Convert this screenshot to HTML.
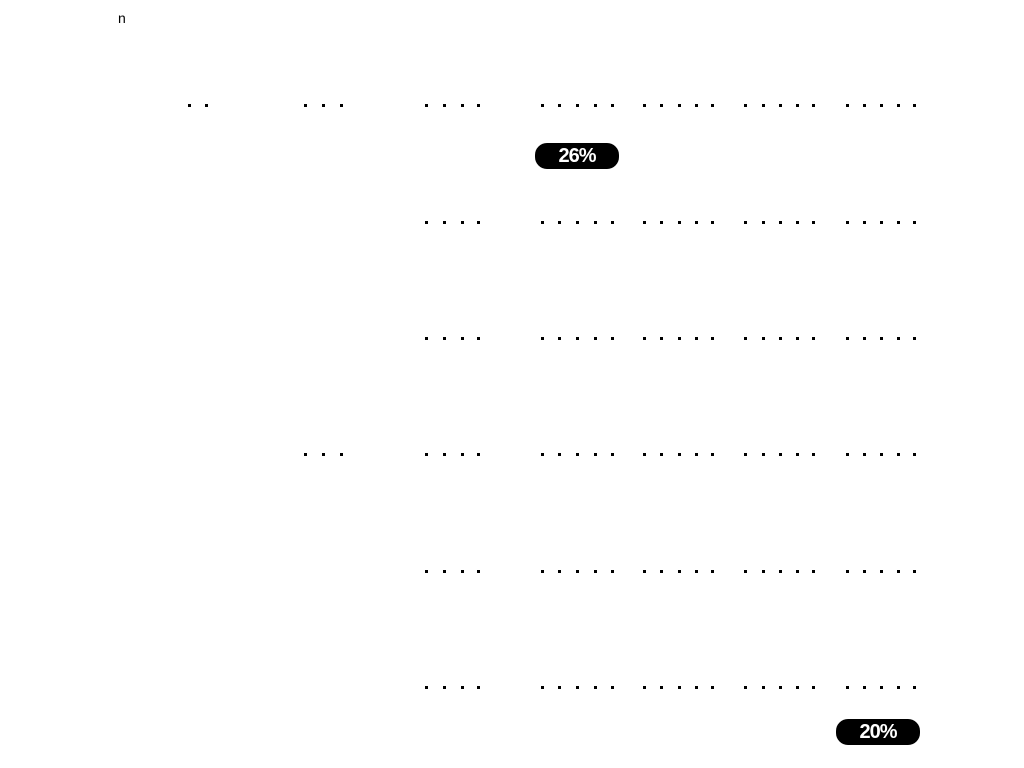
<!DOCTYPE html>
<html><head><meta charset="utf-8"><style>
html,body{margin:0;padding:0;background:#fff;width:1024px;height:768px;overflow:hidden;position:relative;font-family:"Liberation Sans",sans-serif}
.d{position:absolute;width:3px;height:3px;background:#000}
.b{position:absolute;width:80px;height:22px;border:2px solid #000;border-radius:12px;background:#000;color:#fff;font-weight:bold;font-size:20px;line-height:22px;text-align:center;letter-spacing:-1px}
.t{position:absolute;font-size:14px;color:#000}
</style></head><body>
<div class="t" style="left:118px;top:10px">n</div>
<div class="b" style="left:535px;top:143px">26%</div>
<div class="b" style="left:836px;top:719px">20%</div>
<div id="g"></div>
<script>
var rows=[104,221,337,453,570,686];
var g1=[188,205],g2=[304,322,340],rest=[425,443,461,477,541,558,576,594,611,643,660,678,695,711,744,762,779,796,812,846,863,880,897,913];
var h='';
rows.forEach(function(y,i){var xs=rest.slice();if(i==0)xs=xs.concat(g1,g2);if(i==3)xs=xs.concat(g2);
xs.forEach(function(x){h+='<div class="d" style="left:'+x+'px;top:'+y+'px"></div>';});});
document.getElementById('g').innerHTML=h;
</script>
</body></html>
